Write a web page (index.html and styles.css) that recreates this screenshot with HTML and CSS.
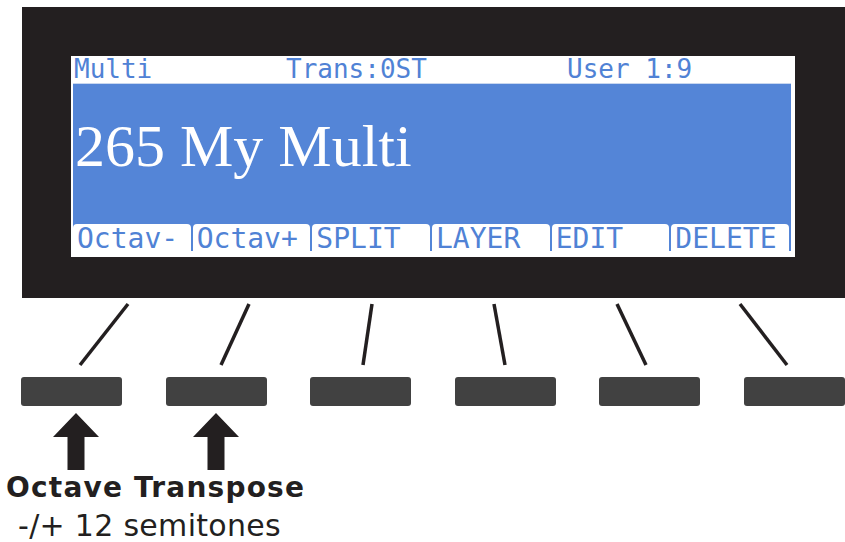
FILE: index.html
```html
<!DOCTYPE html>
<html lang="en">
<head>
  <meta charset="UTF-8">
  <meta name="viewport" content="width=device-width, initial-scale=1.0">
  <title>Multi mode soft buttons</title>
  <link rel="stylesheet" href="styles.css">
</head>
<body>
  <div class="panel">
    <div class="frame">
      <div class="screen">
        <div class="status">
          <span class="mode">Multi</span>
          <span class="trans">Trans:0ST</span>
          <span class="bank">User 1:9</span>
        </div>
        <div class="title">265 My Multi</div>
        <div class="softkeys">
          <div class="key">Octav-</div>
          <div class="key">Octav+</div>
          <div class="key">SPLIT</div>
          <div class="key">LAYER</div>
          <div class="key">EDIT</div>
          <div class="key">DELETE</div>
        </div>
      </div>
    </div>

    <!-- leader lines from the screen labels to the buttons -->
    <svg class="links" width="845" height="79" viewBox="0 0 845 79">
      <line x1="128" y1="6" x2="80" y2="67"/>
      <line x1="249" y1="6" x2="221" y2="67"/>
      <line x1="372" y1="6" x2="363" y2="67"/>
      <line x1="494" y1="6" x2="505" y2="67"/>
      <line x1="617" y1="6" x2="646" y2="67"/>
      <line x1="740" y1="6" x2="787" y2="67"/>
    </svg>

    <div class="buttons">
      <div class="btn"></div>
      <div class="btn"></div>
      <div class="btn"></div>
      <div class="btn"></div>
      <div class="btn"></div>
      <div class="btn"></div>
    </div>

    <div class="arrows">
      <svg class="arrow" width="48" height="57" viewBox="0 0 48 57"><path d="M24 0 L47 24 L32.5 24 L32.5 57 L15.5 57 L15.5 24 L1 24 Z"/></svg>
      <svg class="arrow" width="48" height="57" viewBox="0 0 48 57"><path d="M24 0 L47 24 L32.5 24 L32.5 57 L15.5 57 L15.5 24 L1 24 Z"/></svg>
    </div>

    <div class="caption">
      <div class="caption-title">Octave Transpose</div>
      <div class="caption-sub">-/+ 12 semitones</div>
    </div>
  </div>
</body>
</html>
```

FILE: styles.css
```css
body { margin: 0; background: #fff; color: #231f20; }
.panel { width: 845px; }

.frame {
  box-sizing: border-box;
  width: 823px;
  height: 291px;
  margin: 7px 0 0 22px;
  padding: 49px 0 0 49px;
  background: #231f20;
}
.screen {
  width: 724px;
  height: 201px;
  background: #fff;
}
.status {
  display: flex;
  height: 27px;
  padding-left: 3px;
  font-family: "DejaVu Sans Mono", monospace;
  font-size: 26px;
  line-height: 27px;
  color: #5082d5;
  white-space: pre;
}
.status .mode { width: 212px; }
.status .trans { width: 281px; }

.title {
  box-sizing: border-box;
  height: 141px;
  margin: 0 4px 0 2px;
  padding: 32px 0 0 2px;
  background: #5485d7;
  border-top: 1px solid #c9d7ef;
  color: #fff;
  font-family: "Liberation Serif", serif;
  font-size: 60px;
  line-height: 60px;
}

.softkeys {
  display: flex;
  gap: 2px;
  height: 33px;
  margin: 0 4px 0 2px;
  padding-right: 2px;
  background: linear-gradient(to bottom, #5485d7 27px, #fff 27px);
}
.key {
  flex: 1;
  padding-left: 4px;
  background: #fff;
  border-radius: 4px 4px 0 0;
  color: #5082d5;
  font-family: "DejaVu Sans Mono", monospace;
  font-size: 28px;
  line-height: 30px;
  white-space: pre;
}

.links { display: block; }
.links line { stroke: #231f20; stroke-width: 3.5; stroke-linecap: butt; }

.buttons {
  display: flex;
  gap: 43.6px;
  padding-left: 21px;
}
.btn {
  width: 101px;
  height: 29px;
  background: #414141;
  border-radius: 3px;
}

.arrows {
  display: flex;
  gap: 92px;
  margin-top: 7px;
  padding-left: 52px;
}
.arrow { display: block; }
.arrow path { fill: #231f20; }

.caption { font-family: "DejaVu Sans", sans-serif; }
.caption-title {
  margin-top: 3px;
  padding-left: 6px;
  font-size: 28px;
  font-weight: bold;
  letter-spacing: 1.2px;
  line-height: 30px;
}
.caption-sub {
  margin-top: 8px;
  padding-left: 18px;
  font-size: 30px;
  letter-spacing: 0.3px;
  line-height: 30px;
}
```
